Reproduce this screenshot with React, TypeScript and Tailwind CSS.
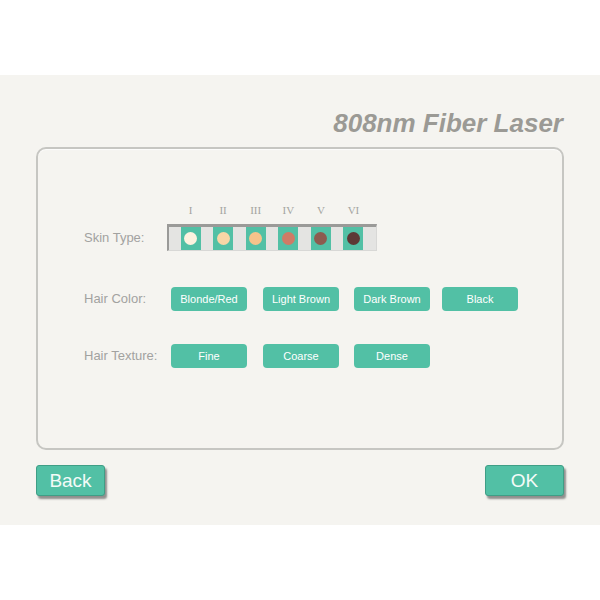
const TEAL = "bg-[#52c0a5]"

const skins = [
  { n: "I", c: "bg-[#fdf2df]" },
  { n: "II", c: "bg-[#f8d6a6]" },
  { n: "III", c: "bg-[#f6c38b]" },
  { n: "IV", c: "bg-[#cf7b66]" },
  { n: "V", c: "bg-[#8d5b4f]" },
  { n: "VI", c: "bg-[#5d3835]" },
]

// gaps between chips in the reference aren't even
const hairColors = [
  { t: "Blonde/Red", m: "" },
  { t: "Light Brown", m: "ml-[16px]" },
  { t: "Dark Brown", m: "ml-[15px]" },
  { t: "Black", m: "ml-[12px]" },
]
const hairTextures = [
  { t: "Fine", m: "" },
  { t: "Coarse", m: "ml-[16px]" },
  { t: "Dense", m: "ml-[15px]" },
]

function Chip({ label, className }: { label: string; className: string }) {
  return (
    <button className={`flex h-[24px] w-[76px] items-center justify-center rounded-[4px] ${TEAL} text-[11px] text-white ${className}`}>
      {label}
    </button>
  )
}

function BigButton({ label, width }: { label: string; width: string }) {
  return (
    <button
      className={`flex h-[31px] ${width} items-center justify-center rounded-[3px] border border-[#3f9e86] ${TEAL} text-[19px] leading-none text-[#f4fbf8] shadow-[2px_3px_2px_rgba(60,60,60,0.55)]`}
    >
      {label}
    </button>
  )
}

export default function App() {
  return (
    <div className="flex h-[600px] w-[600px] flex-col bg-white font-['Liberation_Sans',Arial,sans-serif]">
      <div className="h-[75px]" />
      <div className="flex h-[450px] flex-col bg-[#f5f4f0] px-[36px]">
        <div className="mb-[11px] mt-[35px] flex justify-end pr-[1px]">
          <h1 className="text-[26px] font-bold italic leading-none text-[#9b9a95]">808nm Fiber Laser</h1>
        </div>

        <div className="h-[303px] rounded-[10px] border-2 border-[#c6c6c2] pl-[46px] pt-[55px] shadow-[inset_0_1px_1px_rgba(255,255,255,0.8)]">
          <div className="ml-[83px] flex gap-[12.6px] px-[13.5px] font-['Liberation_Serif',serif] text-[11px] leading-[12px] text-[#a4a4a0]">
            {skins.map((s) => (
              <span key={s.n} className="w-[20px] text-center">
                {s.n}
              </span>
            ))}
          </div>

          <div className="mt-[8px] flex items-center text-[13px] text-[#a2a2a0]">
            <span className="w-[83px]">Skin Type:</span>
            <div className="flex h-[27px] w-[210px] gap-[12.6px] border-l-2 border-t-[3px] border-b border-r border-l-[#9a9a98] border-t-[#9a9a98] border-b-[#d8d8d6] border-r-[#d8d8d6] bg-[#e4e4e2] px-[11.5px]">
              {skins.map((s) => (
                <div key={s.n} className={`flex w-[20px] items-center justify-center ${TEAL}`}>
                  <div className={`h-[13px] w-[13px] rounded-full ${s.c}`} />
                </div>
              ))}
            </div>
          </div>

          <div className="mt-[36px] flex items-center text-[13px] text-[#a2a2a0]">
            <span className="w-[87px]">Hair Color:</span>
            <div className="flex">
              {hairColors.map((h) => (
                <Chip key={h.t} label={h.t} className={h.m} />
              ))}
            </div>
          </div>

          <div className="mt-[33px] flex items-center text-[13px] text-[#a2a2a0]">
            <span className="w-[87px]">Hair Texture:</span>
            <div className="flex">
              {hairTextures.map((h) => (
                <Chip key={h.t} label={h.t} className={h.m} />
              ))}
            </div>
          </div>
        </div>

        <div className="mt-[15px] flex justify-between">
          <BigButton label="Back" width="w-[69px]" />
          <BigButton label="OK" width="w-[79px]" />
        </div>
      </div>
      <div className="flex-1" />
    </div>
  )
}
